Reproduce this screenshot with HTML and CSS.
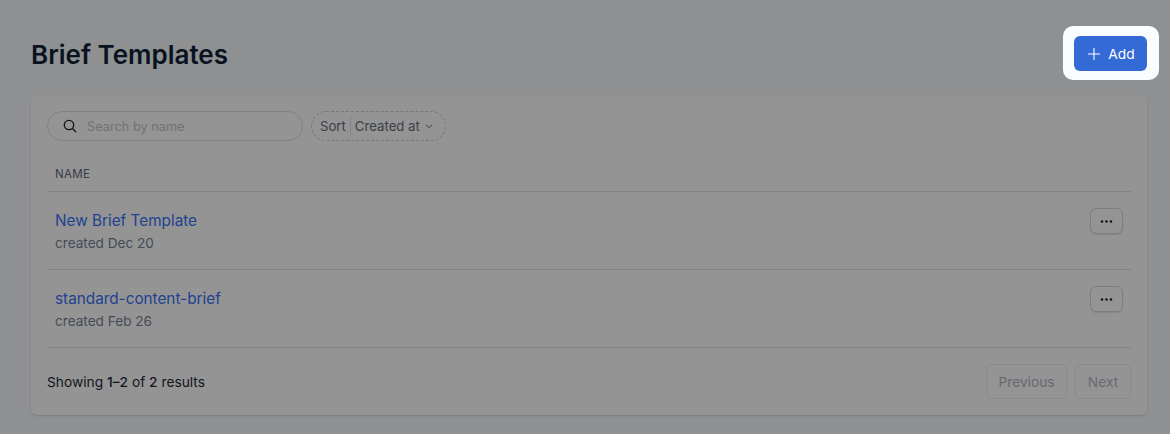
FILE: index.html
```html
<!DOCTYPE html>
<html lang="en">
<head>
<meta charset="utf-8">
<title>Brief Templates</title>
<link rel="stylesheet" href="styles.css">
</head>
<body>
<main class="page">
  <header class="page-head">
    <h1 class="title">Brief Templates</h1>
    <div class="spotlight">
      <button class="add-btn" type="button">
        <svg class="plus" viewBox="0 0 14 14" width="14" height="14" aria-hidden="true"><path d="M7 1.4v11.2M1.4 7h11.2" fill="none" stroke="currentColor" stroke-width="1.1" stroke-linecap="round"/></svg>
        <span>Add</span>
      </button>
    </div>
  </header>
  <section class="card">
    <div class="toolbar">
      <label class="search">
        <svg class="search-icon" viewBox="0 0 16 16" width="16" height="16" aria-hidden="true"><circle cx="7" cy="7" r="4.7" fill="none" stroke="currentColor" stroke-width="1.3"/><path d="M10.5 10.5l3.2 3.2" fill="none" stroke="currentColor" stroke-width="1.3" stroke-linecap="round"/></svg>
        <span class="placeholder">Search by name</span>
      </label>
      <button class="sort" type="button">
        <span class="sort-label">Sort</span>
        <span class="sort-value">Created at</span>
        <svg class="chev" viewBox="0 0 10 10" width="10" height="10" aria-hidden="true"><path d="M2 3.8L5 6.6l3-2.8" fill="none" stroke="currentColor" stroke-width="1" stroke-linecap="round" stroke-linejoin="round"/></svg>
      </button>
    </div>
    <div class="col-head">NAME</div>
    <div class="row">
      <div class="row-main">
        <a class="row-link">New Brief Template</a>
        <div class="row-meta">created Dec 20</div>
      </div>
      <button class="more" type="button" aria-label="More">
        <svg viewBox="0 0 13 3" width="13" height="3" aria-hidden="true"><circle cx="2" cy="1.5" r="1.2"/><circle cx="6.5" cy="1.5" r="1.2"/><circle cx="11" cy="1.5" r="1.2"/></svg>
      </button>
    </div>
    <div class="row">
      <div class="row-main">
        <a class="row-link">standard-content-brief</a>
        <div class="row-meta">created Feb 26</div>
      </div>
      <button class="more" type="button" aria-label="More">
        <svg viewBox="0 0 13 3" width="13" height="3" aria-hidden="true"><circle cx="2" cy="1.5" r="1.2"/><circle cx="6.5" cy="1.5" r="1.2"/><circle cx="11" cy="1.5" r="1.2"/></svg>
      </button>
    </div>
    <footer class="foot">
      <p class="count">Showing <b>1–2</b> of <b>2</b> results</p>
      <div class="pager">
        <button class="page-btn prev" type="button">Previous</button>
        <button class="page-btn next" type="button">Next</button>
      </div>
    </footer>
  </section>
</main>
</body>
</html>
```
FILE: styles.css
```css
* { box-sizing: border-box; }
html, body { margin: 0; height: 100%; }
body {
  background: #8f9092;
  font-family: Inter, "Liberation Sans", sans-serif;
  color: #0b1520;
  overflow: hidden;
}
button { font-family: inherit; cursor: default; }
.page { padding: 0 23px 0 31px; }
.page-head {
  height: 95px;
  display: flex;
  align-items: flex-start;
  justify-content: space-between;
}
.title {
  margin: 41px 0 0;
  font-size: 26px;
  line-height: 28px;
  font-weight: 600;
  color: #08131f;
}
.spotlight {
  margin: 26px -12px 0 0;
  padding: 10px 12px 9px 11px;
  background: #fbfcfe;
  border-radius: 10px;
}
.add-btn {
  width: 73px;
  height: 35px;
  display: flex;
  align-items: center;
  justify-content: center;
  gap: 7px;
  padding: 0 0 0 1px;
  border: 0;
  border-radius: 6px;
  background: #346ad6;
  color: #fff;
  font-size: 13.75px;
  font-weight: 400;
}
.plus { display: block; }
.card {
  height: 320px;
  padding: 16px 16px 0;
  background: #949494;
  border-radius: 6px;
  box-shadow: 0 1px 2px rgba(60, 62, 68, .22);
}
.toolbar { display: flex; gap: 8px; height: 30px; }
.search {
  width: 256px;
  display: flex;
  align-items: center;
  gap: 9px;
  padding-left: 15px;
  border: 1px solid #7f8288;
  border-radius: 15px;
}
.search-icon { color: #0d1116; margin-left: -1px; }
.placeholder { font-size: 12.75px; color: #6f7276; }
.sort {
  width: 135px;
  display: flex;
  align-items: center;
  padding: 0 0 0 8px;
  border: 1px dashed #75787d;
  border-radius: 15px;
  background: none;
  color: #3a3f48;
  font-size: 13.2px;
  font-weight: 400;
}
.sort-label { padding-right: 4px; border-right: 1px solid #808286; line-height: 20px; }
.sort-value { padding-left: 4px; }
.chev { margin-left: 4px; }
.col-head {
  height: 51px;
  padding: 26px 8px 0;
  border-bottom: 1px solid #828386;
  font-size: 11.5px;
  line-height: 15px;
  font-weight: 400;
  letter-spacing: .35px;
  color: #363c48;
}
.row {
  height: 78px;
  display: flex;
  justify-content: space-between;
  align-items: flex-start;
  padding: 16px 8px 0;
  border-bottom: 1px solid #828386;
}
.row-link {
  display: block;
  font-size: 15.3px;
  line-height: 25px;
  color: #20428f;
}
.row-meta {
  font-size: 13.6px;
  line-height: 21px;
  color: #454b56;
}
.more {
  width: 33px;
  height: 26px;
  display: flex;
  align-items: center;
  justify-content: center;
  padding: 0;
  background: none;
  border: 1px solid #7b7c80;
  border-radius: 6px;
  box-shadow: 0 1px 1px rgba(60, 62, 68, .15);
}
.more svg { fill: #0b0f14; display: block; }
.foot {
  display: flex;
  justify-content: space-between;
  align-items: center;
  padding-top: 16px;
}
.count { margin: 0; font-size: 13.75px; color: #11161d; }
.count b { font-weight: 500; }
.pager { display: flex; gap: 8px; }
.page-btn {
  height: 35px;
  padding: 0;
  background: none;
  border: 1px solid #878a8e;
  border-radius: 6px;
  font-size: 13.75px;
  color: #666a71;
}
.prev { width: 81px; }
.next { width: 56px; }
```
